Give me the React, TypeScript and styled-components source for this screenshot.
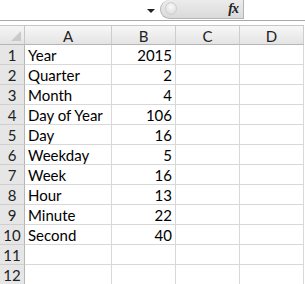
import React from "react";
import styled, { createGlobalStyle } from "styled-components";

const Global = createGlobalStyle`
  html, body { margin: 0; padding: 0; background: #ffffff; }
  body { font-family: Lato, "Liberation Sans", sans-serif; overflow: hidden; }
  * { box-sizing: border-box; }
`;

const Sheet = styled.div`
  width: 305px;
  height: 284px;
  overflow: hidden;
  background: #ffffff;
`;

const FormulaBar = styled.div`
  height: 21px;
  display: flex;
  align-items: stretch;
  border-bottom: 1px solid #a9a9a9;
  background: #ffffff;
`;

const NameBox = styled.div`
  width: 160px;
  display: flex;
  align-items: center;
  justify-content: flex-end;
  padding-right: 5px;
`;

const Arrow = styled.div`
  width: 0;
  height: 0;
  border-left: 4px solid transparent;
  border-right: 4px solid transparent;
  border-top: 4px solid #222;
  margin-top: 1px;
`;

const Pill = styled.div`
  position: relative;
  width: 84px;
  height: 19px;
  border: 1px solid #b4b4b4;
  border-top: none;
  border-radius: 10px 0 0 10px;
  background: linear-gradient(#ececec, #dadada);
  display: flex;
  align-items: center;
  justify-content: flex-end;
  padding-right: 5px;
`;

const Knob = styled.div`
  position: absolute;
  left: 4px;
  top: 2px;
  width: 12px;
  height: 13px;
  border-radius: 50%;
  background: radial-gradient(circle at 50% 35%, #fafafa, #d6d6d6);
  border: 1px solid #cfcfcf;
`;

const Fx = styled.span`
  font-family: "Liberation Serif", serif;
  font-style: italic;
  font-weight: bold;
  font-size: 14px;
  color: #222;
  letter-spacing: -1px;
`;

const Spacer = styled.div`
  height: 4px;
  background: #ffffff;
`;

const Grid = styled.div`
  display: grid;
  grid-template-columns: 25px 87px 64px 64px 64px 1px;
  grid-auto-rows: 20px;
`;

const Corner = styled.div`
  position: relative;
  background: linear-gradient(#f5f5f5, #e3e3e3);
  border-top: 1px solid #c6c6c6;
  border-right: 1px solid #c6c6c6;
  border-bottom: 1px solid #b6b6b6;
  &::after {
    content: "";
    position: absolute;
    right: 3px;
    bottom: 3px;
    width: 0;
    height: 0;
    border-left: 10px solid transparent;
    border-bottom: 10px solid #c9c9c9;
  }
`;

const ColHead = styled.div`
  background: linear-gradient(#f7f7f7, #e4e4e4);
  border-top: 1px solid #c6c6c6;
  border-right: 1px solid #cdcdcd;
  border-bottom: 1px solid #b6b6b6;
  display: flex;
  align-items: center;
  justify-content: center;
  font-size: 15px;
  color: #222;
  padding-top: 1px;
`;

const RowHead = styled.div`
  background: #e6e6e6;
  border-right: 1px solid #b6b6b6;
  border-bottom: 1px solid #cfcfcf;
  display: flex;
  align-items: center;
  justify-content: center;
  font-size: 15px;
  color: #222;
  padding-top: 1px;
`;

const Cell = styled.div<{ $num?: boolean }>`
  border-right: 1px solid #d8d8d8;
  border-bottom: 1px solid #d8d8d8;
  display: flex;
  align-items: center;
  justify-content: ${(p) => (p.$num ? "flex-end" : "flex-start")};
  padding: 1px 3px 0;
  font-size: 15px;
  color: #000;
  white-space: nowrap;
`;

const Edge = styled.div`
  background: #ffffff;
`;

const rows: [string, string][] = [
  ["Year", "2015"],
  ["Quarter", "2"],
  ["Month", "4"],
  ["Day of Year", "106"],
  ["Day", "16"],
  ["Weekday", "5"],
  ["Week", "16"],
  ["Hour", "13"],
  ["Minute", "22"],
  ["Second", "40"],
  ["", ""],
  ["", ""],
];

export default function App() {
  return (
    <Sheet>
      <Global />
      <FormulaBar>
        <NameBox>
          <Arrow />
        </NameBox>
        <Pill>
          <Knob />
          <Fx>fx</Fx>
        </Pill>
      </FormulaBar>
      <Spacer />
      <Grid>
        <Corner />
        {["A", "B", "C", "D"].map((c) => (
          <ColHead key={c}>{c}</ColHead>
        ))}
        <Edge />
        {rows.map(([label, value], i) => (
          <React.Fragment key={i}>
            <RowHead>{i + 1}</RowHead>
            <Cell>{label}</Cell>
            <Cell $num>{value}</Cell>
            <Cell />
            <Cell />
            <Edge />
          </React.Fragment>
        ))}
      </Grid>
    </Sheet>
  );
}
